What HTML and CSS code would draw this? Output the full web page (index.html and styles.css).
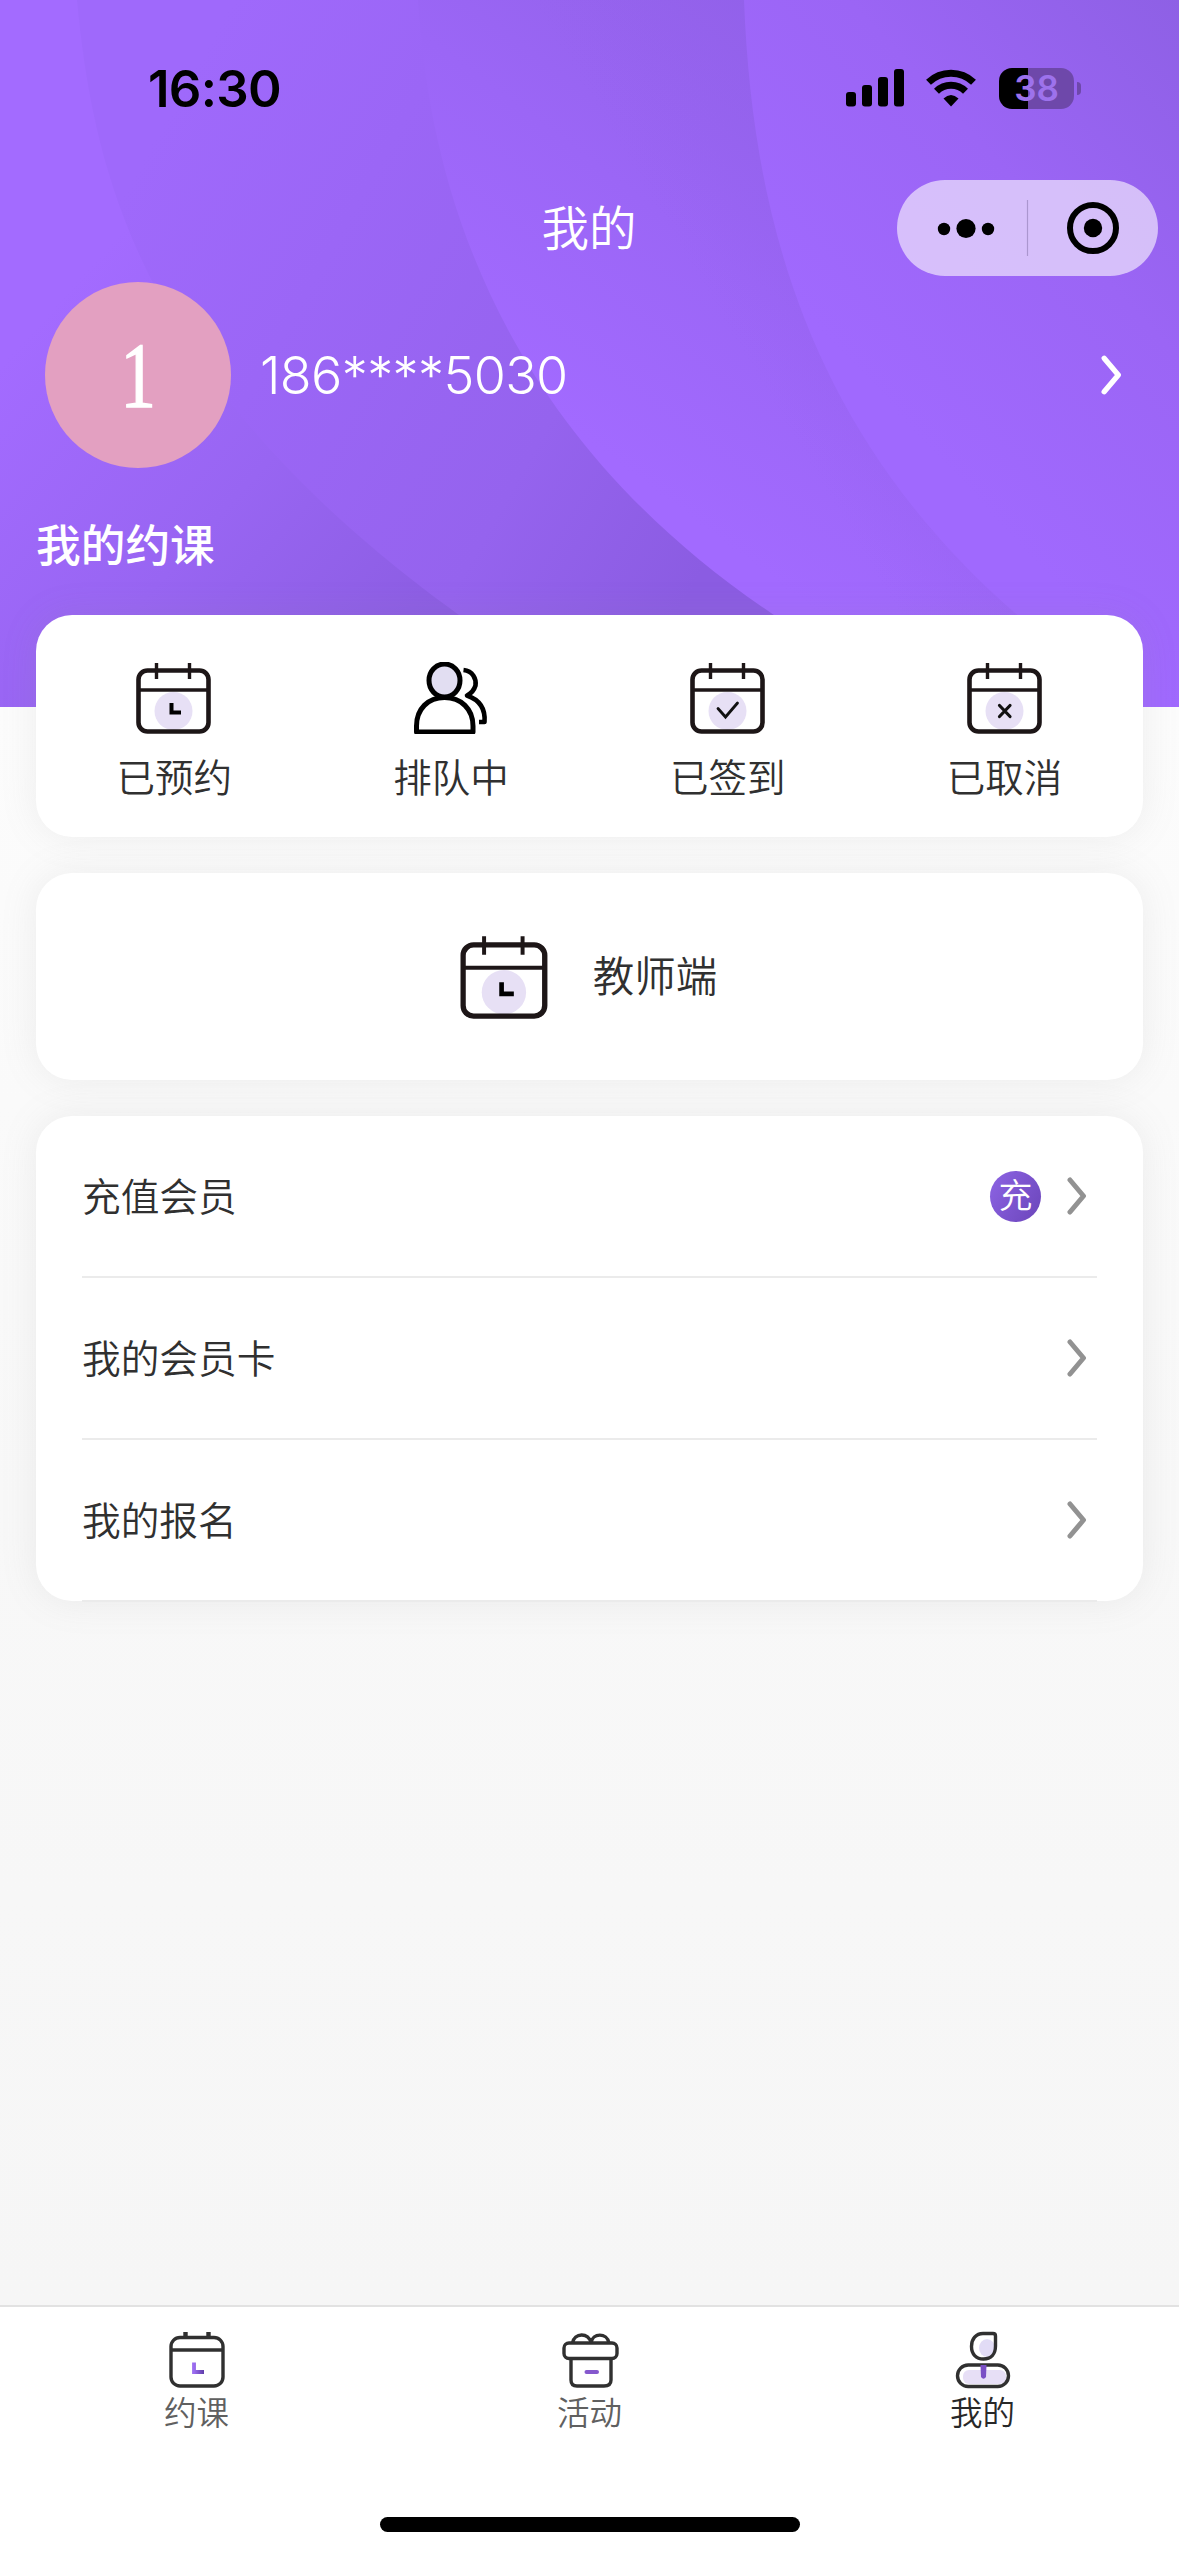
FILE: index.html
```html
<!DOCTYPE html>
<html lang="zh-CN">
<head>
<meta charset="utf-8">
<title>我的</title>
<link rel="stylesheet" href="styles.css">
</head>
<body>
<svg class="defs" width="0" height="0" aria-hidden="true">
  <defs>
    <linearGradient id="accent" x1="0" y1="0" x2="1" y2="0"><stop offset="0" stop-color="#9b6cf0"/><stop offset="1" stop-color="#5f3da8"/></linearGradient>
    <symbol id="calendar" viewBox="0 0 76 72">
      <circle cx="37.500" cy="49" r="19" fill="#e7e0f5"/>
      <rect x="2.500" y="8.500" width="70" height="61" rx="9" fill="none" stroke="#1d1617" stroke-width="4.600"/>
      <path d="M3 28H73" stroke="#1d1617" stroke-width="3.400"/>
      <path d="M20.500 1V17M53.500 1V17" stroke="#1d1617" stroke-width="3.400"/>
    </symbol>
    <symbol id="chevron" viewBox="0 0 20 38">
      <path d="M3 3L16.500 19L3 35" fill="none" stroke="currentColor" stroke-width="5" stroke-linecap="round" stroke-linejoin="round"/>
    </symbol>
  </defs>
</svg>
<div class="page">
  <header class="hero">
    <svg class="hero-bg" viewBox="0 0 1179 707" preserveAspectRatio="none">
      <defs>
        <linearGradient id="g0" gradientUnits="userSpaceOnUse" x1="60" y1="300" x2="450" y2="650"><stop offset="0" stop-color="#a36bff"/><stop offset=".5" stop-color="#9865f2"/><stop offset="1" stop-color="#8a5ce0"/></linearGradient>
        <linearGradient id="g1" gradientUnits="userSpaceOnUse" x1="120" y1="200" x2="720" y2="540"><stop offset="0" stop-color="#9f69fb"/><stop offset=".3" stop-color="#9b66f6"/><stop offset=".7" stop-color="#9563ee"/><stop offset="1" stop-color="#8b5ce2"/></linearGradient>
        <linearGradient id="g2" gradientUnits="userSpaceOnUse" x1="560" y1="420" x2="830" y2="60"><stop offset="0" stop-color="#a26aff"/><stop offset=".5" stop-color="#9b66f6"/><stop offset="1" stop-color="#9262e9"/></linearGradient>
        <linearGradient id="g3" gradientUnits="userSpaceOnUse" x1="820" y1="330" x2="1179" y2="0"><stop offset="0" stop-color="#a069fe"/><stop offset=".5" stop-color="#9b65f5"/><stop offset="1" stop-color="#8e60e5"/></linearGradient>
        <linearGradient id="g4" gradientUnits="userSpaceOnUse" x1="800" y1="450" x2="1000" y2="330"><stop offset="0" stop-color="#9360ec" stop-opacity="0"/><stop offset="1" stop-color="#9360ec" stop-opacity=".55"/></linearGradient>
      </defs>
      <rect width="1179" height="707" fill="url(#g0)"/>
      <path d="M77 0C95 190 150 420 540 670L580 707H1179V0Z" fill="url(#g1)"/>
      <path d="M418 0C430 190 500 430 771 613L910 707H1179V0Z" fill="url(#g2)"/>
      <path d="M418 0C430 190 500 430 771 613L910 707H1179V0Z" fill="url(#g4)"/>
      <path d="M744 0C752 210 805 430 1015 613L1130 707H1179V0Z" fill="url(#g3)"/>
    </svg>
    <div class="status">
      <span class="time">16:30</span>
      <span class="status-icons">
        <svg width="58" height="38" viewBox="0 0 58 38"><rect y="23" width="10" height="14.500" rx="3"/><rect x="16" y="16" width="10" height="21.500" rx="3"/><rect x="32" y="8" width="10" height="29.500" rx="3"/><rect x="48" width="10" height="37.500" rx="3"/></svg>
        <svg class="wifi" width="50" height="38" viewBox="0 0 50 38"><g fill="none" stroke="#000" stroke-width="7"><path d="M2.500 13.200A32.500 32.500 0 0 1 47.500 13.200"/><path d="M10.500 22.300A20.600 20.600 0 0 1 39.500 22.300"/></g><path d="M17.500 29.500Q25 22.500 32.500 29.500L25 37.500Z"/></svg>
        <span class="battery"><span class="battery-text">38</span></span><span class="battery-nub"></span>
      </span>
    </div>
    <div class="nav">
      <h1 class="nav-title">我的</h1>
      <svg class="capsule" width="261" height="96" viewBox="0 0 261 96">
        <rect width="261" height="96" rx="48" fill="#f0e6fc" fill-opacity=".7"/>
        <circle cx="47" cy="49" r="6.200"/><circle cx="69" cy="48.500" r="9.600"/><circle cx="91" cy="49" r="6.200"/>
        <path d="M130.500 20V76" stroke="#ab96cf" stroke-width="1.200"/>
        <circle cx="196" cy="48" r="23" fill="none" stroke="#000" stroke-width="6"/><circle cx="196" cy="48" r="9.200"/>
      </svg>
    </div>
    <div class="profile">
      <span class="avatar"><span class="avatar-text">1</span></span>
      <span class="phone">186****5030</span>
      <svg class="chevron-white" width="21" height="40"><use href="#chevron"/></svg>
    </div>
    <h2 class="section-title">我的约课</h2>
  </header>

  <main class="content">
    <section class="card shortcuts">
      <a class="shortcut"><svg class="icon" viewBox="0 0 76 72"><use href="#calendar"/><path d="M35.500 41V50.500H45" fill="none" stroke="#000" stroke-width="4"/></svg><span>已预约</span></a>
      <a class="shortcut"><svg class="icon" viewBox="0 0 76 72"><g fill="none" stroke="#000" stroke-width="5" stroke-linejoin="round"><ellipse cx="31.500" cy="18.500" rx="15.500" ry="16.500" fill="#e2def2"/><path d="M3.500 70V64C3.500 47 15 35.500 31.500 35.500S60 47 60 64V70Z"/><path d="M50.500 8C60 9 63.500 17 62.500 23.500C61 28.500 58 31.500 54 33.500C67 38 72.500 47 71.500 60H66" stroke-width="4.600"/></g></svg><span>排队中</span></a>
      <a class="shortcut"><svg class="icon" viewBox="0 0 76 72"><use href="#calendar"/><path d="M28 46.500L35.500 55L47.500 41" fill="none" stroke="#111" stroke-width="2.800" stroke-linecap="round"/></svg><span>已签到</span></a>
      <a class="shortcut"><svg class="icon" viewBox="0 0 76 72"><use href="#calendar"/><path d="M32.500 43.500L43 54.500M43 43.500L32.500 54.500" fill="none" stroke="#111" stroke-width="3.200" stroke-linecap="round"/></svg><span>已取消</span></a>
    </section>

    <section class="card teacher">
      <svg class="icon-lg" viewBox="0 0 76 72"><use href="#calendar"/><path d="M35.500 40.500V50.500H46" fill="none" stroke="#000" stroke-width="4"/></svg>
      <span class="teacher-label">教师端</span>
    </section>

    <section class="card list">
      <a class="row"><span class="row-label">充值会员</span><span class="badge">充</span><svg class="chevron" width="20" height="38"><use href="#chevron"/></svg></a>
      <a class="row"><span class="row-label">我的会员卡</span><svg class="chevron" width="20" height="38"><use href="#chevron"/></svg></a>
      <a class="row"><span class="row-label">我的报名</span><svg class="chevron" width="20" height="38"><use href="#chevron"/></svg></a>
    </section>
  </main>

  <nav class="tabbar">
    <div class="tabs">
      <a class="tab"><svg width="58" height="58" viewBox="0 0 58 58"><g fill="none" stroke="#303030" stroke-width="3.400"><rect x="3" y="6.500" width="52" height="48.500" rx="9"/><path d="M3 19H55"/><path d="M17.500 1V6M40.500 1V6" stroke-width="4.400"/></g><path d="M26 31.500V41H36" fill="none" stroke="url(#accent)" stroke-width="3.800"/></svg><span>约课</span></a>
      <a class="tab"><svg width="58" height="58" viewBox="0 0 58 58"><g fill="none" stroke="#303030" stroke-width="3.400"><path d="M11.500 12C13 1.500 28 1 30 12C31.500 1.500 46 1.500 48 12"/><rect x="3" y="12" width="53" height="15.500" rx="5"/><path d="M10 28V49Q10 55 16 55H43Q50 55 50 49V28"/></g><path d="M25.500 41H36" stroke="#8558cd" stroke-width="4" stroke-linecap="round"/></svg><span>活动</span></a>
      <a class="tab active"><svg width="58" height="58" viewBox="0 0 58 58"><ellipse cx="33" cy="17" rx="8" ry="9" fill="#e2dcf6"/><rect x="9" y="39" width="43" height="14" rx="6" fill="#e7dff6"/><g fill="none" stroke="#303030" stroke-width="3.400"><path d="M29 2.500H39Q41.500 2.500 41.500 5V15C41.500 23 37 28 29.500 28S17.500 23 17.500 15.500S22 2.500 29 2.500Z"/><rect x="3.500" y="34" width="51" height="21.500" rx="10.700"/></g><path d="M26.500 34H32.500L32 46Q29.500 49.500 27 46Z" fill="#7a4fc5"/></svg><span>我的</span></a>
    </div>
    <div class="home-indicator"></div>
  </nav>
</div>
</body>
</html>
```

FILE: styles.css
```css
* { box-sizing: border-box; }

body {
  margin: 0;
  font-family: "Noto Sans CJK SC", sans-serif;
  font-weight: 350;
  color: #303030;
}

.defs { position: absolute; }

.page {
  width: 1179px;
  height: 2556px;
  display: flex;
  flex-direction: column;
  background: linear-gradient(#fcfcfc 707px, #f8f8f8 1500px, #f6f6f6 2300px);
}

.hero {
  position: relative;
  flex: none;
  height: 707px;
  color: #fff;
}

.hero-bg {
  position: absolute;
  inset: 0;
  width: 100%;
  height: 100%;
}

.hero > :not(.hero-bg) { position: relative; }

.status {
  height: 176px;
  padding: 0 98px 0 148px;
  display: flex;
  justify-content: space-between;
  align-items: center;
  color: #000;
  font-family: Inter, sans-serif;
}

.time {
  font-size: 51px;
  font-weight: 600;
  letter-spacing: -.7px;
}

.status-icons { display: flex; align-items: center; }
.wifi { margin: 0 23px 0 22px; }

.battery {
  width: 75px;
  height: 41px;
  border-radius: 13px;
  display: flex;
  align-items: center;
  justify-content: center;
  background: linear-gradient(90deg, #000 29px, #6e48aa 29px);
}

.battery-text {
  color: #9d72ec;
  font-size: 35px;
  font-weight: 600;
  line-height: 1;
}

.battery-nub {
  width: 4px;
  height: 13px;
  margin-left: 3px;
  border-radius: 0 5px 5px 0;
  background: #6e48aa;
}

.nav {
  height: 104px;
  display: grid;
  grid-template-columns: 1fr auto 1fr;
  align-items: center;
  padding-right: 21px;
}

.nav-title {
  grid-column: 2;
  margin: 0 0 5px 20px;
  font-size: 47.5px;
  font-weight: 350;
  line-height: 60px;
}

.capsule { justify-self: end; }

.profile {
  height: 188px;
  margin-top: 1px;
  padding: 0 57px 0 45px;
  display: flex;
  align-items: center;
}

.avatar {
  width: 186px;
  height: 186px;
  border-radius: 50%;
  background: #e3a0c1;
  font: 93px/188px "Liberation Serif", serif;
  text-align: center;
}

.avatar-text {
  display: inline-block;
  transform: scaleX(.76);
  -webkit-text-stroke: 1.5px #fff;
}

.phone {
  flex: 1;
  margin-left: 29px;
  font-family: Inter, sans-serif;
  font-size: 52px;
  font-weight: 300;
  letter-spacing: -.6px;
}

.section-title {
  margin: 42px 36px 0;
  font-size: 44.7px;
  font-weight: 500;
  line-height: 64px;
}

.content {
  position: relative;
  flex: 1;
  margin-top: -92px;
  padding: 0 36px;
  display: flex;
  flex-direction: column;
  gap: 36px;
}

.card {
  border-radius: 36px;
  background: #fff;
  box-shadow: 0 0 36px rgba(140, 140, 140, .13);
}

.shortcuts {
  height: 222px;
  padding-top: 47px;
  display: grid;
  grid-template-columns: repeat(4, 1fr);
}

.shortcut {
  display: flex;
  flex-direction: column;
  align-items: center;
  font-size: 38.5px;
  line-height: 56px;
}

.icon { width: 76px; height: 72px; margin-bottom: 13px; }

.teacher {
  height: 207px;
  padding-right: 2px;
  display: flex;
  align-items: center;
  justify-content: center;
  gap: 44px;
  font-size: 41.5px;
}

.teacher-label { padding-bottom: 6px; }

.icon-lg { width: 89px; height: 84px; }

.list { height: 485px; padding: 0 46px; }

.row {
  height: 162px;
  display: flex;
  align-items: center;
  font-size: 38.7px;
  border-bottom: 2px solid #ebebeb;
}

.row-label { flex: 1; padding-bottom: 5px; }

.badge {
  width: 51px;
  height: 51px;
  margin-right: 26px;
  border-radius: 50%;
  color: #fff;
  background: linear-gradient(120deg, #8d64e4, #6b45ba);
  font-size: 34px;
  line-height: 46px;
  text-align: center;
}

.chevron { margin-right: 10px; color: #929292; }

.tabbar {
  height: 251px;
  background: #fff;
  border-top: 2px solid #e2e2e2;
  display: flex;
  flex-direction: column;
  align-items: center;
  justify-content: space-between;
  padding: 24px 0 24px;
}

.tabs {
  width: 100%;
  display: grid;
  grid-template-columns: repeat(3, 1fr);
}

.tab {
  display: flex;
  flex-direction: column;
  align-items: center;
  color: #606060;
  font-size: 32.5px;
  line-height: 44px;
}

.active { color: #282828; }

.home-indicator {
  width: 420px;
  height: 15px;
  border-radius: 8px;
  background: #000;
}
```
